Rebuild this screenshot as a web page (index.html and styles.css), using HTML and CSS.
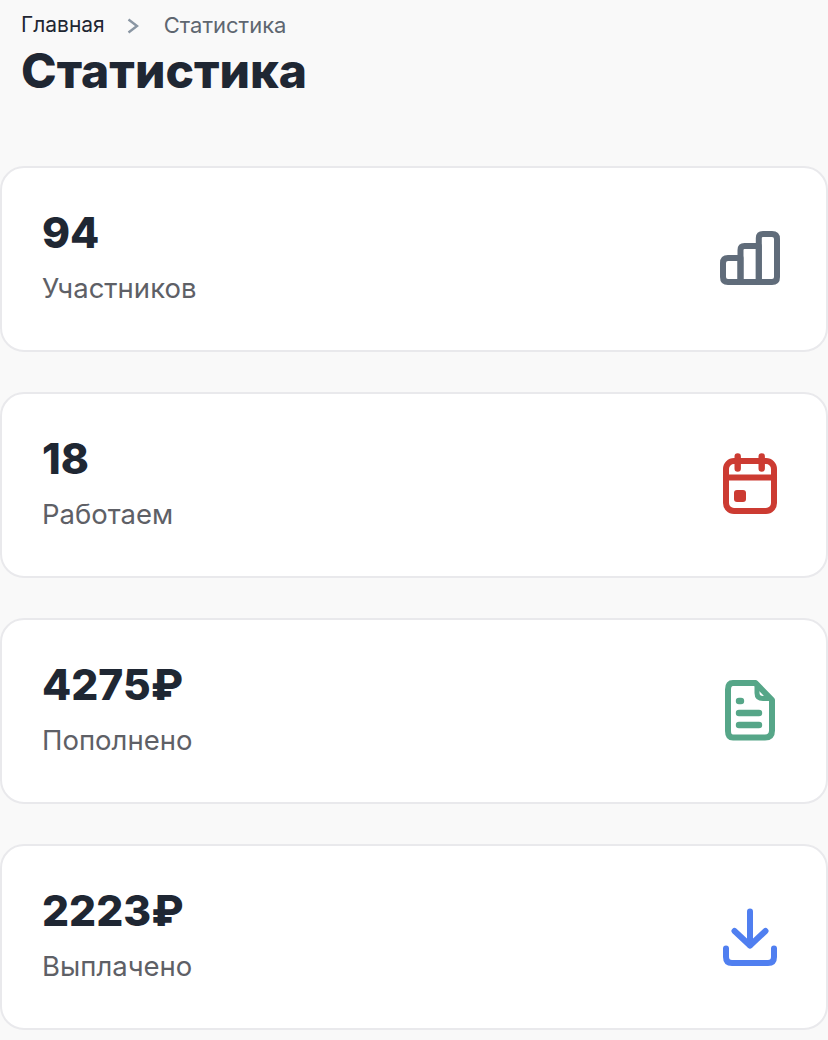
FILE: index.html
```html
<!DOCTYPE html>
<html lang="ru">

<head>
    <meta charset="utf-8">
    <meta name="viewport" content="width=device-width, initial-scale=1.0">
    <title>Статистика</title>
    <link rel="stylesheet" href="styles.css">
</head>

<body>

    <header class="top">
        <nav class="crumbs">
            <span class="crumb-home">Главная</span>
            <svg class="crumb-arrow" viewBox="0 0 12 16" width="12" height="16">
                <path d="M1.5 1.5 L10 8 L1.5 14.5" fill="none" stroke="#8a96a3" stroke-width="2.4" />
            </svg>
            <span class="crumb-here">Статистика</span>
        </nav>
        <h1>Статистика</h1>
    </header>

    <section class="stats">
        <article class="card">
            <div class="text">
                <p class="num">94</p>
                <p class="label">Участников</p>
            </div>
            <svg class="icon" viewBox="0 0 60 60" fill="none" stroke="#606c7a" stroke-width="6" stroke-linejoin="round">
                <path d="M20.5 53 H8 Q3 53 3 48 V34 Q3 29 8 29 H20.5 Z" />
                <path d="M20.5 53 V21 Q20.5 17 24.5 17 H38.8 V53 Z" />
                <path d="M38.8 53 V9 Q38.8 5 43 5 H52 Q57 5 57 10 V48 Q57 53 52 53 Z" />
            </svg>
        </article>

        <article class="card">
            <div class="text">
                <p class="num">18</p>
                <p class="label">Работаем</p>
            </div>
            <svg class="icon" viewBox="0 0 60 60" fill="none" stroke="#cc3b32" stroke-width="6" stroke-linecap="round">
                <rect x="6" y="6" width="48" height="50" rx="8" />
                <path d="M6 22.5 H54" />
                <path d="M17.7 1.5 V13.5 M41.7 1.5 V13.5" stroke-width="6.4" />
                <rect x="14" y="35" width="12" height="12" rx="3" fill="#cc3b32" stroke="none" />
            </svg>
        </article>

        <article class="card">
            <div class="text">
                <p class="num">4275₽</p>
                <p class="label">Пополнено</p>
            </div>
            <svg class="icon" viewBox="0 0 60 60" fill="none" stroke="#56a688" stroke-width="6" stroke-linecap="round" stroke-linejoin="round">
                <path d="M13 2 H35.5 L52 19 V49.5 Q52 56.5 45 56.5 H13 Q8 56.5 8 50 V8.5 Q8 2 13 2 Z" />
                <path d="M37 4 V12 Q37 17.5 43 17.5 H50" stroke-width="5" />
                <path d="M19 20 H21 M19 32 H39 M19 44 H39" stroke-width="6.4" />
            </svg>
        </article>

        <article class="card">
            <div class="text">
                <p class="num">2223₽</p>
                <p class="label">Выплачено</p>
            </div>
            <svg class="icon" viewBox="0 0 60 60" fill="none" stroke="#507ff0" stroke-width="6" stroke-linecap="round" stroke-linejoin="round">
                <path d="M30 4.5 V38" />
                <path d="M14.5 24 L30 38.5 L45.5 24" />
                <path d="M6 41.5 V50 Q6 56 12 56 H48 Q54 56 54 50 V41.5" />
            </svg>
        </article>
    </section>

</body>

</html>
```

FILE: styles.css
```css
body {
    margin: 0;
    background-color: #f9f9f9;
    font-family: Inter, "Liberation Sans", sans-serif;
    color: #1f2733;
}

p {
    margin: 0;
}

.top {
    padding: 13px 21px 0;
    height: 166px;
    box-sizing: border-box;
}

.crumbs {
    display: flex;
    align-items: center;
    line-height: 24px;
}

.crumb-home {
    font-size: 21px;
    color: #1f2733;
}

.crumb-arrow {
    margin: 2px 25px 0 22px;
}

.crumb-here {
    font-size: 22px;
    color: #5e6670;
}

h1 {
    margin: 6px 0 0;
    font-size: 48px;
    line-height: 56px;
    font-weight: 800;
}

.stats {
    display: flex;
    flex-direction: column;
    gap: 40px;
}

.card {
    display: flex;
    justify-content: space-between;
    align-items: center;
    height: 186px;
    box-sizing: border-box;
    padding: 0 46px 0 40px;
    background-color: #fff;
    border: 2px solid #e9e9ec;
    border-radius: 24px;
}

.text {
    padding-bottom: 5px;
}

.num {
    font-size: 42.5px;
    line-height: 48px;
    font-weight: 800;
}

.label {
    margin-top: 15px;
    font-size: 27.5px;
    line-height: 32px;
    color: #5e6066;
}

.icon {
    width: 60px;
    height: 60px;
    overflow: visible;
}
```
